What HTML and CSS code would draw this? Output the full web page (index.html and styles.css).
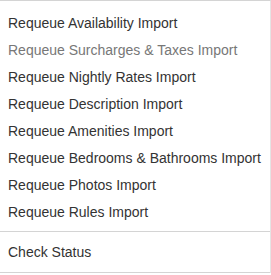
FILE: index.html
```html
<!DOCTYPE html>
<html>
<head>
<meta charset="utf-8">
<link rel="stylesheet" href="styles.css">
</head>
<body>
<div class="menu">
  <ul class="list">
    <li class="item">Requeue Availability Import</li>
    <li class="item disabled">Requeue Surcharges &amp; Taxes Import</li>
    <li class="item">Requeue Nightly Rates Import</li>
    <li class="item">Requeue Description Import</li>
    <li class="item">Requeue Amenities Import</li>
    <li class="item">Requeue Bedrooms &amp; Bathrooms Import</li>
    <li class="item">Requeue Photos Import</li>
    <li class="item">Requeue Rules Import</li>
  </ul>
  <ul class="list status">
    <li class="item">Check Status</li>
  </ul>
</div>
</body>
</html>
```
FILE: styles.css
```css
html, body {
  margin: 0;
  padding: 0;
  background: #fff;
}
body {
  font-family: "Liberation Sans", Arial, sans-serif;
  font-size: 14px;
  color: #333;
}
.menu {
  width: 270px;
  border-top: 1px solid #d4d4d4;
  border-right: 1px solid #e4e4e4;
}
.list {
  list-style: none;
  margin: 0;
  padding: 9px 0 5px;
  border-bottom: 1px solid #d4d4d4;
}
.list.status {
  padding: 7px 0 6px;
}
.item {
  height: 27px;
  line-height: 27px;
  padding-left: 8px;
  white-space: nowrap;
}
.item.disabled {
  color: #777;
}
```
